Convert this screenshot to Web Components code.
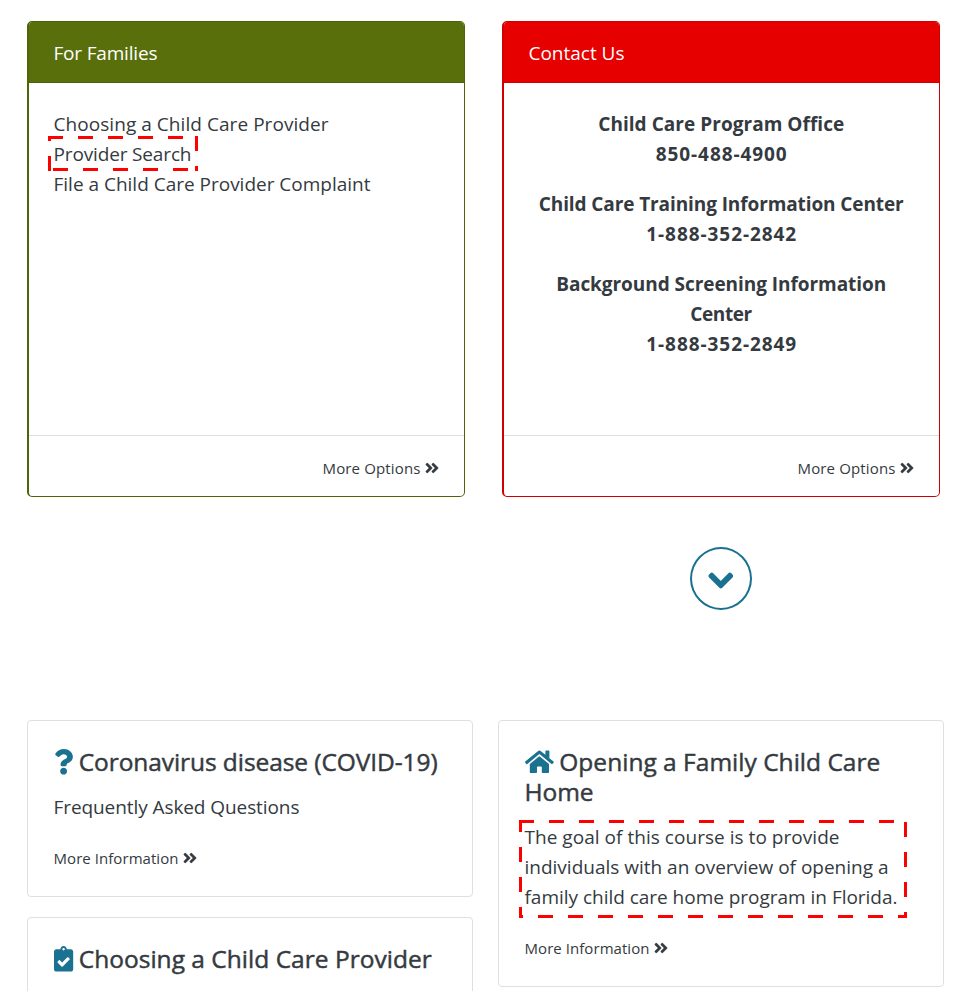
<!DOCTYPE html>
<html lang="en">
<head>
<meta charset="utf-8">
<title>Child Care</title>
<style>
html{background:#fff}
body{margin:0;height:991px;overflow:hidden;font-family:"Open Sans","Noto Sans",sans-serif;font-size:19px;color:#343a40;font-weight:400}
</style>
</head>
<body>
<care-page></care-page>
<script>
const ICONS={
more:[448,'M224.3 273l-136 136c-9.4 9.4-24.6 9.4-33.9 0l-22.6-22.6c-9.4-9.4-9.4-24.6 0-33.9l96.4-96.4-96.4-96.4c-9.4-9.4-9.4-24.6 0-33.9L54.3 103c9.4-9.4 24.6-9.4 33.9 0l136 136c9.5 9.4 9.5 24.6.1 34zm192-34l-136-136c-9.4-9.4-24.6-9.4-33.9 0l-22.6 22.6c-9.4 9.4-9.4 24.6 0 33.9l96.4 96.4-96.4 96.4c-9.4 9.4-9.4 24.6 0 33.9l22.6 22.6c9.4 9.4 24.6 9.4 33.9 0l136-136c9.4-9.2 9.4-24.4 0-33.8z'],
down:[448,'M207.029 381.476L12.686 187.132c-9.373-9.373-9.373-24.569 0-33.941l22.667-22.667c9.357-9.357 24.522-9.375 33.901-.04L224 284.505l154.745-154.021c9.379-9.335 24.544-9.317 33.901.04l22.667 22.667c9.373 9.373 9.373 24.569 0 33.941L240.971 381.476c-9.373 9.372-24.569 9.372-33.942 0z'],
question:[384,'M202.021 0C122.202 0 70.503 32.703 29.914 91.026c-7.363 10.58-5.093 25.086 5.178 32.874l43.138 32.709c10.373 7.865 25.132 6.026 33.253-4.148 25.049-31.381 43.63-49.449 82.757-49.449 30.764 0 68.816 19.799 68.816 49.631 0 22.552-18.617 34.134-48.993 51.164-35.423 19.86-82.299 44.576-82.299 106.405V320c0 13.255 10.745 24 24 24h72.471c13.255 0 24-10.745 24-24v-5.773c0-42.86 125.268-44.645 125.268-160.627C377.504 66.256 286.902 0 202.021 0zM192 373.459c-38.196 0-69.271 31.075-69.271 69.271 0 38.195 31.075 69.27 69.271 69.27s69.271-31.075 69.271-69.271-31.075-69.27-69.271-69.27z'],
home:[576,'M280.37 148.26L96 300.11V464a16 16 0 0 0 16 16l112.06-.29a16 16 0 0 0 15.92-16V368a16 16 0 0 1 16-16h64a16 16 0 0 1 16 16v95.64a16 16 0 0 0 16 16.05L464 480a16 16 0 0 0 16-16V300L295.67 148.26a12.19 12.19 0 0 0-15.3 0zM571.6 251.47L488 182.56V44.05a12 12 0 0 0-12-12h-56a12 12 0 0 0-12 12v72.61L318.47 43a48 48 0 0 0-61 0L4.34 251.47a12 12 0 0 0-1.6 16.9l25.5 31A12 12 0 0 0 45.15 301l235.22-193.74a12.19 12.19 0 0 1 15.3 0L530.9 301a12 12 0 0 0 16.9-1.6l25.5-31a12 12 0 0 0-1.7-16.93z'],
clipboard:[384,'M336 64h-80c0-35.3-28.7-64-64-64s-64 28.7-64 64H48C21.5 64 0 85.5 0 112v352c0 26.5 21.5 48 48 48h288c26.5 0 48-21.5 48-48V112c0-26.5-21.5-48-48-48zM192 40c13.3 0 24 10.7 24 24s-10.7 24-24 24-24-10.7-24-24 10.7-24 24-24zm121.2 231.8l-143 141.8c-4.7 4.7-12.3 4.6-17-.1l-82.6-83.3c-4.7-4.7-4.6-12.3.1-17L99.1 285c4.7-4.7 12.3-4.6 17 .1l46 46.4 106-105.2c4.7-4.7 12.3-4.6 17 .1l28.2 28.4c4.7 4.8 4.6 12.3-.1 17z']
};
const define=(name,html,setup)=>customElements.define(name,class extends HTMLElement{
  connectedCallback(){
    if(this.shadowRoot)return;
    const t=document.createElement('template');
    t.innerHTML=typeof html==='function'?html(this):html;
    this.attachShadow({mode:'open'}).append(t.content.cloneNode(true));
    if(setup)setup(this);
  }
});

// Solid glyph, sized by its em height.
define('ui-icon',el=>{
  const [w,d]=ICONS[el.getAttribute('name')],s=+el.getAttribute('size'),k=el.getAttribute('weight')||0;
  return `<style>:host{display:block;flex:none}svg{display:block;overflow:visible}</style>
  <svg width="${w*s/512}" height="${s}" viewBox="0 0 ${w} 512" fill="currentColor" stroke="currentColor" stroke-width="${k}" stroke-linejoin="round"><path d="${d}"/></svg>`;
});

// One line of text, tracked to a set measure.
define('text-line',`<style>:host{display:block;line-height:30px;white-space:nowrap}span{display:inline-block}</style><span><slot></slot></span>`,el=>{
  const s=el.shadowRoot.querySelector('span'),w=+el.getAttribute('w'),n=el.textContent.length;
  const gap=(w-s.getBoundingClientRect().width)/(n-1);
  s.style.letterSpacing=gap+'px';
  s.style.marginRight=-gap+'px';
});

// Dashed highlight laid over the text it wraps.
define('dash-mark',el=>{
  const n=k=>+el.getAttribute(k),w=n('w'),h=n('h'),[rt,bt,lf]=el.getAttribute('phase').split(' ').map(Number);
  const line=(x1,y1,x2,y2,o)=>`<path d="M${x1} ${y1}L${x2} ${y2}" stroke-dashoffset="${o}"/>`;
  return `<style>:host{display:block;position:relative;width:max-content}
  svg{position:absolute;left:${n('x')}px;top:${n('y')}px}</style>
  <slot></slot><svg width="${w}" height="${h}" fill="none" stroke="#f00" stroke-width="3" stroke-dasharray="15 15">
  ${line(0,1.5,w-3,1.5,0)}${line(w-1.5,0,w-1.5,h,rt)}${line(w,h-1.5,0,h-1.5,bt)}${line(1.5,h,1.5,0,lf)}</svg>`;
});

define('more-link',`<style>:host{display:flex;align-items:center;gap:4px;font-size:15px}</style><slot></slot><ui-icon name="more" size="16" weight="10"></ui-icon>`);

define('link-panel',`<style>
:host{display:flex;flex-direction:column;box-sizing:border-box;width:438px;height:476px;border:1px solid var(--edge);border-left-width:2px;border-radius:5px;overflow:hidden}
header{height:59px;padding:1px 0 0 24.5px;display:flex;align-items:center;background:var(--fill);border-bottom:1px solid var(--edge);color:#fff}
main{flex:1;padding:26px 25px 0 24.5px;text-align:var(--align,left)}
footer{height:60px;box-sizing:content-box;border-top:1px solid #dfdfdf;display:flex;justify-content:flex-end;padding-right:25.5px}
::slotted(more-link){height:63px}
</style><header><slot name="title"></slot></header><main><slot></slot></main><footer><slot name="more"></slot></footer>`);

define('info-card',`<style>
:host{display:block;box-sizing:border-box;width:446px;border:1px solid #dfdfdf;border-radius:4px;padding:26px 26px 23px 25.5px}
.text{margin:15px 0 21px}
</style><slot name="title"></slot><div class="text"><slot></slot></div><slot name="more"></slot>`);

define('card-title',el=>`<style>:host{display:block;font-size:24.5px;font-weight:500;-webkit-text-stroke:.45px currentColor}
.row{display:flex;height:30px;gap:${el.getAttribute('gap')}px}
ui-icon{color:#1a7190;margin-top:1.5px}
</style><div class="row"><ui-icon name="${el.getAttribute('icon')}" size="25.6"></ui-icon><slot name="first"></slot></div><slot></slot>`);

define('next-button',`<style>:host{display:flex;box-sizing:border-box;width:62px;height:63px;border:2px solid #1a7190;border-radius:50%;color:#1a7190;align-items:center;justify-content:center;padding-top:4px}</style>
<ui-icon name="down" size="27" weight="30"></ui-icon>`);

define('care-page',`<style>
:host{display:block;width:968px;height:991px;overflow:hidden}
.panels{display:flex;gap:37px;padding:21px 0 0 27px}
.next{display:flex;padding:50px 0 0 690px}
.cards{display:grid;grid-template-columns:446px 446px;column-gap:25px;padding:110px 0 0 27px;align-items:start}
.col{display:grid;gap:20px}
.green{--fill:#586f0c;--edge:#4f6409}
.red{--fill:#e60000;--edge:#d00000;--align:center}
.phone{display:flex;flex-direction:column;align-items:center;margin-bottom:20px;font-weight:700;font-size:19px}
</style>
<div class="panels">
<link-panel class="green"><text-line slot="title" w="104">For Families</text-line>
<text-line w="275">Choosing a Child Care Provider</text-line>
<dash-mark x="-5.5" y="-3" w="150" h="35" phase="0 -10 -0"><text-line w="138">Provider Search</text-line></dash-mark>
<text-line w="317">File a Child Care Provider Complaint</text-line>
<more-link slot="more"><text-line w="98">More Options</text-line></more-link></link-panel>
<link-panel class="red"><text-line slot="title" w="96">Contact Us</text-line>
<div class="phone"><text-line w="246">Child Care Program Office</text-line><text-line w="131">850-488-4900</text-line></div>
<div class="phone"><text-line w="365">Child Care Training Information Center</text-line><text-line w="150">1-888-352-2842</text-line></div>
<div class="phone"><text-line w="330">Background Screening Information</text-line><text-line w="62">Center</text-line><text-line w="150">1-888-352-2849</text-line></div>
<more-link slot="more"><text-line w="98">More Options</text-line></more-link></link-panel>
</div>
<div class="next"><next-button></next-button></div>
<div class="cards"><div class="col">
<info-card><card-title slot="title" icon="question" gap="6"><text-line slot="first" w="359">Coronavirus disease (COVID-19)</text-line></card-title>
<text-line w="246">Frequently Asked Questions</text-line>
<more-link slot="more"><text-line w="125">More Information</text-line></more-link></info-card>
<info-card><card-title slot="title" icon="clipboard" gap="6"><text-line slot="first" w="353">Choosing a Child Care Provider</text-line></card-title></info-card>
</div><info-card><card-title slot="title" icon="home" gap="6"><text-line slot="first" w="321">Opening a Family Child Care</text-line><text-line w="69">Home</text-line></card-title>
<dash-mark x="-5.5" y="-2" w="388" h="98" phase="-2 6 4"><text-line w="315">The goal of this course is to provide</text-line><text-line w="364">individuals with an overview of opening a</text-line><text-line w="373">family child care home program in Florida.</text-line></dash-mark>
<more-link slot="more"><text-line w="125">More Information</text-line></more-link></info-card>
</div>`);
</script>
</body>
</html>
